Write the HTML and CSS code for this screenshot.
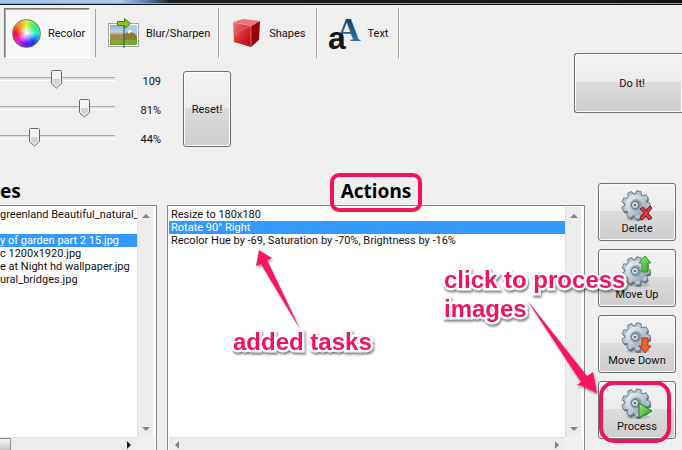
FILE: index.html
```
<!DOCTYPE html>
<html lang="en">
<head>
    <meta charset="UTF-8">
    <meta name="viewport" content="width=device-width, initial-scale=1.0">
    <title>Image Actions</title>
    <link rel="stylesheet" href="styles.css">
</head>
<body>

    <!-- shared icon parts -->
    <svg class="defs" width="0" height="0" aria-hidden="true">
        <defs>
            <linearGradient id="steel" x1="0" y1="0" x2="1" y2="1">
                <stop offset="0" stop-color="#f2f6f9"/>
                <stop offset="0.5" stop-color="#c3ced8"/>
                <stop offset="1" stop-color="#8798a8"/>
            </linearGradient>
            <linearGradient id="green" x1="0" y1="0" x2="1" y2="1">
                <stop offset="0" stop-color="#9bf07c"/>
                <stop offset="1" stop-color="#2b9c22"/>
            </linearGradient>
            <path id="tooth" d="M-4 -9 L-2 -14 L2 -14 L4 -9 Z"/>
            <g id="teeth">
                <use href="#tooth" transform="rotate(12)"/>
                <use href="#tooth" transform="rotate(52)"/>
                <use href="#tooth" transform="rotate(92)"/>
                <use href="#tooth" transform="rotate(132)"/>
                <use href="#tooth" transform="rotate(172)"/>
                <use href="#tooth" transform="rotate(212)"/>
                <use href="#tooth" transform="rotate(252)"/>
                <use href="#tooth" transform="rotate(292)"/>
                <use href="#tooth" transform="rotate(332)"/>
            </g>
            <g id="gear">
                <ellipse cx="17" cy="31" rx="12" ry="2" fill="#000" opacity="0.15"/>
                <g transform="translate(15 17)">
                    <use href="#teeth" x="1" y="2" fill="#66757f"/>
                    <use href="#teeth" fill="#b9c6d0" stroke="#73828f"/>
                    <circle r="10.500" fill="url(#steel)"/>
                    <circle r="5.500" fill="#8798a7" stroke="#a4b1bd"/>
                    <circle cx="-1" r="3.500" fill="#e9eef2" stroke="#5d6c7b"/>
                    <circle cx="-1" r="1.500" fill="#6b7780"/>
                </g>
            </g>
        </defs>
    </svg>

    <div class="titlebar"></div>

    <header class="top">
        <div class="options">
            <nav class="toolbar">
                <button class="tool active"><span class="wheel"></span>Recolor</button>
                <button class="tool blur">
                    <svg width="31" height="31" viewBox="0 0 31 31">
                        <defs>
                            <linearGradient id="photo" x1="0" y1="0" x2="0" y2="1">
                                <stop offset="0" stop-color="#7fb4e4"/>
                                <stop offset="0.35" stop-color="#c5d5de"/>
                                <stop offset="0.5" stop-color="#a98b55"/>
                                <stop offset="0.75" stop-color="#a08a43"/>
                                <stop offset="0.85" stop-color="#7eb53c"/>
                                <stop offset="1" stop-color="#5d9a2c"/>
                            </linearGradient>
                        </defs>
                        <rect x="0.5" y="5.5" width="30" height="23" fill="#fff" stroke="#a5a5a5"/>
                        <rect x="2" y="7" width="27" height="20" fill="url(#photo)"/>
                        <path d="M16 7h13v15H16z" fill="#a5cdf0"/>
                        <path d="M16 17l6-6 7 7v6H16z" fill="#8c7a36"/>
                        <path d="M18 15l4-4 4 4-3-1-2 2-1-2z" fill="#fff"/>
                        <path d="M16 22h13v5H16z" fill="#76ad37"/>
                        <path d="M16 5v25" stroke="#4b4b4b"/>
                        <path d="M9.500 3.500h7v-3l6 5-6 5v-3h-7z" fill="#8fc31c" stroke="#4c7a0c"/>
                    </svg>
                    Blur/Sharpen
                </button>
                <button class="tool shapes">
                    <svg width="30" height="30" viewBox="0 0 30 30">
                        <defs>
                            <linearGradient id="cube" x1="0" y1="0" x2="1" y2="1">
                                <stop offset="0" stop-color="#f58080"/>
                                <stop offset="0.5" stop-color="#d52d33"/>
                                <stop offset="1" stop-color="#b3080d"/>
                            </linearGradient>
                        </defs>
                        <path d="M19 29l9-8 2 2-9 6z" fill="#fff"/>
                        <path d="M1 4l18 4v21L2 24z" fill="url(#cube)"/>
                        <path d="M19 8l9-5-1 19-8 7z" fill="#960308"/>
                        <path d="M1 4l10-3 17 2-9 5z" fill="#ed7375"/>
                        <path d="M3 18Q6 10 18 9" fill="none" stroke="#f18383" opacity="0.6"/>
                        <path d="M1 4l18 4v20" fill="none" stroke="#f0a0a0" opacity="0.6"/>
                    </svg>
                    Shapes
                </button>
                <button class="tool text">
                    <svg width="33" height="34" viewBox="0 0 33 34">
                        <defs>
                            <linearGradient id="blue" x1="0" y1="0" x2="0" y2="1">
                                <stop offset="0" stop-color="#12304a"/>
                                <stop offset="1" stop-color="#2f86bd"/>
                            </linearGradient>
                        </defs>
                        <text class="glyph-serif" x="8" y="25" fill="url(#blue)">A</text>
                        <text class="glyph-sans" x="0" y="33">a</text>
                    </svg>
                    Text
                </button>
            </nav>

            <div class="settings">
                <div class="sliders">
                    <input type="range" id="hue" min="0" max="180" value="109" aria-label="Hue">
                    <output for="hue">109</output>
                    <input type="range" id="saturation" min="0" max="100" value="81" aria-label="Saturation">
                    <output for="saturation">81%</output>
                    <input type="range" id="brightness" min="0" max="100" value="44" aria-label="Brightness">
                    <output for="brightness">44%</output>
                </div>
                <button class="btn reset">Reset!</button>
            </div>
        </div>
        <button class="btn doit">Do It!</button>
    </header>

    <main class="workspace">
        <section class="pane files">
            <h2>es</h2>
            <div class="listbox">
                <ul>
                    <li>greenland Beautiful_natural_la</li>
                    <li></li>
                    <li class="selected">y of garden part 2 15.jpg</li>
                    <li>c 1200x1920.jpg</li>
                    <li>e at Night hd wallpaper.jpg</li>
                    <li>ural_bridges.jpg</li>
                </ul>
                <div class="vscroll"><i class="up"></i><i class="down"></i></div>
                <div class="hscroll"><i class="thumb"></i><i class="right dark"></i></div>
                <div class="corner"></div>
            </div>
        </section>

        <section class="pane actions">
            <h2><span class="framed">Actions</span></h2>
            <div class="listbox">
                <ul>
                    <li>Resize to 180x180</li>
                    <li class="selected">Rotate 90° Right</li>
                    <li>Recolor Hue by -69, Saturation by -70%, Brightness by -16%</li>
                </ul>
                <div class="vscroll"><i class="up"></i><i class="down"></i></div>
                <div class="hscroll"><i class="left"></i><i class="right"></i></div>
                <div class="corner"></div>
            </div>
        </section>

        <div class="commands">
            <button class="btn command">
                <svg width="32" height="34" viewBox="0 0 32 34">
                    <use href="#gear"/>
                    <path d="M19 21l3-2 3 4 4-5 2 2-4 5 4 5-3 2-3-4-4 4-2-2 4-5z" fill="#e0393c" stroke="#8d1115"/>
                </svg>
                Delete
            </button>
            <button class="btn command">
                <svg width="32" height="34" viewBox="0 0 32 34">
                    <use href="#gear"/>
                    <path d="M24 2l6 7h-3v9h-6V9h-3z" fill="url(#green)" stroke="#2c9a22"/>
                </svg>
                Move Up
            </button>
            <button class="btn command">
                <svg width="32" height="34" viewBox="0 0 32 34">
                    <use href="#gear"/>
                    <path d="M21 18h6v8h3l-6 7-6-7h3z" fill="#ee6230" stroke="#b33610"/>
                </svg>
                Move Down
            </button>
            <button class="btn command process">
                <svg width="32" height="34" viewBox="0 0 32 34">
                    <use href="#gear"/>
                    <path d="M18 17l13 8-13 7z" fill="url(#green)" stroke="#1e7a18"/>
                </svg>
                Process
            </button>
        </div>
    </main>

    <!-- callouts drawn over the window -->
    <svg class="arrows" width="682" height="450" viewBox="0 0 682 450" aria-hidden="true">
        <path d="M259 250l13 8-5 2 33 69-39-65-5 2z"/>
        <path d="M527 300l60 76 6-4 4 21-15-7-5-1 4-3z"/>
    </svg>
    <p class="note note-tasks">added tasks</p>
    <p class="note note-process">click to process<br>images</p>

</body>
</html>
```
FILE: styles.css
```
* {
    box-sizing: border-box;
}
body {
    margin: 0;
    height: 100vh;
    display: flex;
    flex-direction: column;
    position: relative;
    overflow: hidden;
    background-color: #efefef;
    font-family: Roboto, "Liberation Sans", sans-serif;
    font-size: 11px;
    line-height: 13px;
    color: #111;
}
button {
    font: inherit;
    color: inherit;
    padding: 0;
    cursor: pointer;
}
.defs {
    position: absolute;
}
.titlebar {
    height: 5px;
    flex: none;
    background: linear-gradient(to right, #9dc3ea 0, #a9cbed 120px, #5a83b4 145px, #1b2227 170px, #10151a 100%);
    border-bottom: 1px solid #111;
    box-shadow: inset 0 -1px #9aa0a5;
}

/* toolbar and sliders */
.top {
    display: flex;
    flex: none;
    height: 173px;
}
.options {
    flex: 1;
}
.toolbar {
    display: flex;
    padding: 3px 0 0 4px;
    height: 53px;
}
.tool {
    display: flex;
    align-items: center;
    gap: 7px;
    border: 0;
    border-right: 1px solid #a0a0a0;
    background: none;
    padding: 0 10px;
    box-shadow: 1px 0 #fff;
    white-space: nowrap;
}
.tool.active {
    position: relative;
    width: 86px;
    margin-right: 6px;
    padding: 0 0 0 7px;
    border: 1px solid #777;
    border-right-color: #fff;
    border-bottom-color: #fff;
    background: repeating-conic-gradient(#fff 0 25%, #efefef 0 50%) 0 0 / 2px 2px;
    box-shadow: inset 1px 1px #aaa;
}
.tool.active::after {
    content: "";
    position: absolute;
    top: 0;
    bottom: 0;
    right: -7px;
    border-right: 1px solid #a0a0a0;
}
.wheel {
    width: 29px;
    height: 29px;
    border-radius: 50%;
    border: 1px solid #777;
    background:
        radial-gradient(circle, #fff 0, rgba(255, 255, 255, 0) 50%),
        conic-gradient(#d6f23c, #3df06a 45deg, #25e8d2 90deg, #1740f0 140deg, #5a1af0 180deg, #f01ae0 225deg, #f0142c 270deg, #ff8a1e 315deg, #d6f23c);
}
.tool.blur {
    padding: 0 8px 0 12px;
}
.tool.shapes {
    padding-left: 13px;
}
.tool.text {
    padding-left: 11px;
}
.glyph-serif {
    font: bold 34px "Liberation Serif", serif;
}
.glyph-sans {
    font: bold 32px "Liberation Sans", sans-serif;
    fill: #161616;
}
.settings {
    display: flex;
    align-items: flex-start;
    gap: 22px;
    padding-top: 13px;
}
.sliders {
    display: grid;
    grid-template-columns: 145px 46px;
    grid-auto-rows: 29px;
    margin: -6px 0 0 -30px;
    align-items: center;
}
.sliders output {
    text-align: right;
    padding-top: 3px;
}
input[type="range"] {
    -webkit-appearance: none;
    appearance: none;
    width: 100%;
    height: 19px;
    margin: 0;
    background: linear-gradient(#a9adad 0 1px, #e4e6e6 1px 3px, #fff 3px) 0 7px / 100% 4px no-repeat;
}
input[type="range"]::-webkit-slider-thumb {
    -webkit-appearance: none;
    width: 11px;
    height: 19px;
    background: url("data:image/svg+xml,%3Csvg xmlns='http://www.w3.org/2000/svg' width='11' height='19'%3E%3Cpath d='M.5 1.500q0-1 1-1h8q1 0 1 1v12l-5 4.500-5-4.500z' fill='%23f4f4f4' stroke='%23686868'/%3E%3Cpath d='M2 9h7v4l-3.500 3L2 13z' fill='%23d4d4d4'/%3E%3C/svg%3E");
}
.btn {
    border: 1px solid #707070;
    border-radius: 3px;
    background: linear-gradient(#f3f3f3, #ebebeb 48%, #dcdcdc 49%, #cecece);
    box-shadow: inset 0 0 0 1px #fafafa;
}
.reset {
    width: 48px;
    height: 76px;
}
.doit {
    width: 108px;
    height: 60px;
    margin-top: 48px;
    padding-left: 7px;
    border-right: 0;
    border-radius: 3px 0 0 3px;
}

/* lists */
.workspace {
    flex: 1;
    display: flex;
    min-height: 0;
}
.pane {
    display: flex;
    flex-direction: column;
    min-width: 0;
}
.files {
    width: 157px;
    margin-right: 10px;
}
.actions {
    flex: 1;
}
h2 {
    margin: 0;
    height: 27px;
    font: bold 19px/27px "Noto Sans", sans-serif;
    color: #000;
}
.actions h2 {
    text-align: center;
}
.framed {
    position: relative;
}
.framed::after {
    content: "";
    position: absolute;
    inset: -5px -11px -8px;
    border: 4px solid #f0145a;
    border-radius: 9px;
}
.listbox {
    flex: 1;
    display: grid;
    grid-template-columns: minmax(0, 1fr) 18px;
    grid-template-rows: 1fr 13px;
    min-height: 0;
    padding: 1px 1px 0;
    border: 1px solid #828790;
    border-bottom: 0;
    background-color: #fff;
}
.files .listbox {
    border-left: 0;
    padding-left: 0;
}
ul {
    list-style: none;
    margin: 0;
    padding: 1px 0 0;
    overflow: hidden;
}
li {
    height: 13px;
    padding-left: 2px;
    white-space: nowrap;
    overflow: hidden;
}
.files li {
    padding-left: 0;
}
.selected {
    background-color: #3399ff;
    color: #fff;
}
.vscroll,
.hscroll {
    display: flex;
    justify-content: space-between;
    align-items: center;
    background-color: #ededed;
}
.vscroll {
    flex-direction: column;
    padding: 7px 0 6px;
    border-left: 1px solid #e0e0e0;
    border-right: 2px solid #fff;
}
.hscroll {
    padding: 0 6px;
    border-top: 1px solid #e0e0e0;
}
.files .hscroll {
    padding-left: 0;
}
.corner {
    background-color: #f0f0f0;
}
.up,
.down {
    border: 4px solid transparent;
}
.up {
    border-top: 0;
    border-bottom-color: #858585;
}
.down {
    border-bottom: 0;
    border-top-color: #858585;
}
.left,
.right {
    border: 4px solid transparent;
    margin-top: 2px;
}
.left {
    border-left: 0;
    border-right-color: #858585;
}
.right {
    border-right: 0;
    border-left-color: #858585;
}
.right.dark {
    border-left-color: #222;
}
.thumb {
    width: 11px;
    height: 12px;
    border: 1px solid #8c8c8c;
    border-left: 0;
    border-bottom: 0;
    background: linear-gradient(#f4f4f4, #c8c8c8);
}

/* command buttons */
.commands {
    display: flex;
    flex-direction: column;
    gap: 8px;
    width: 78px;
    margin: 5px 6px 0 13px;
}
.command {
    display: flex;
    flex-direction: column;
    align-items: center;
    height: 58px;
    flex: none;
    padding-top: 4px;
}
.process {
    position: relative;
}
.process::after {
    content: "";
    position: absolute;
    inset: -1px 4px -5px 0;
    border: 4px solid #f0145a;
    border-radius: 15px;
}

/* callouts */
.arrows {
    position: absolute;
    top: 0;
    left: 0;
    fill: #fb1560;
    filter: drop-shadow(1px 2px 1px rgba(0, 0, 0, 0.4));
    pointer-events: none;
}
.note {
    position: absolute;
    margin: 0;
    font: bold 24px/29px "Liberation Sans", sans-serif;
    color: #f0145a;
    -webkit-text-stroke: 5px #fff;
    paint-order: stroke fill;
    filter: drop-shadow(1px 2px 1px rgba(0, 0, 0, 0.5));
    white-space: nowrap;
}
.note-tasks {
    left: 233px;
    top: 327px;
}
.note-process {
    left: 444px;
    top: 265px;
}
```
